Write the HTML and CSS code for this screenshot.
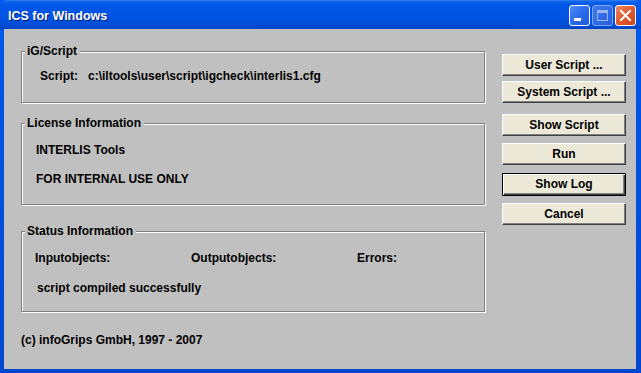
FILE: index.html
```html
<!DOCTYPE html>
<html>
<head>
<meta charset="utf-8">
<title>ICS for Windows</title>
<link rel="stylesheet" href="styles.css">
</head>
<body>
<div class="window">
  <div class="titlebar">
    <div class="title">ICS for Windows</div>
    <div class="tbuttons">
      <div class="tbtn tmin"><svg width="21" height="21" viewBox="0 0 21 21"><rect x="5" y="13" width="7" height="3" fill="#fff"/></svg></div>
      <div class="tbtn tmax"><svg width="21" height="21" viewBox="0 0 21 21"><rect x="5.5" y="5.5" width="10" height="10" fill="none" stroke="#9db4ee" stroke-width="1"/><rect x="5" y="5" width="11" height="3" fill="#9db4ee"/></svg></div>
      <div class="tbtn tclose"><svg width="21" height="21" viewBox="0 0 21 21"><path d="M6 6 L15 15 M15 6 L6 15" stroke="#fff" stroke-width="2" stroke-linecap="square"/></svg></div>
    </div>
  </div>
  <div class="client">
    <div class="main">
      <div class="left">
        <fieldset class="group g1">
          <legend>iG/Script</legend>
          <div class="inner">
            <div class="row script-row"><span class="lbl">Script:</span><span>c:\iltools\user\script\igcheck\interlis1.cfg</span></div>
          </div>
        </fieldset>
        <fieldset class="group g2">
          <legend>License Information</legend>
          <div class="inner">
            <div class="line">INTERLIS Tools</div>
            <div class="line second">FOR INTERNAL USE ONLY</div>
          </div>
        </fieldset>
        <fieldset class="group g3">
          <legend>Status Information</legend>
          <div class="inner">
            <div class="status-row"><span class="c1">Inputobjects:</span><span class="c2">Outputobjects:</span><span>Errors:</span></div>
            <div class="line msg">script compiled successfully</div>
          </div>
        </fieldset>
      </div>
      <div class="right">
        <div class="btn b1">User Script ...</div>
        <div class="btn b2">System Script ...</div>
        <div class="btn b3">Show Script</div>
        <div class="btn b4">Run</div>
        <div class="btn b5 default">Show Log</div>
        <div class="btn b6">Cancel</div>
      </div>
    </div>
    <div class="footer">(c) infoGrips GmbH, 1997 - 2007</div>
  </div>
</div>
</body>
</html>
```
FILE: styles.css
```css
html, body {
  margin: 0;
  padding: 0;
  background: #c0c0c0;
}
.window {
  width: 641px;
  height: 373px;
  box-sizing: border-box;
  background: linear-gradient(to bottom, #0058ee, #0047d0);
  display: flex;
  flex-direction: column;
  font-family: "Liberation Sans", Arial, sans-serif;
  font-size: 12px;
  font-weight: bold;
  color: #000;
}
.titlebar {
  height: 29px;
  flex: none;
  display: flex;
  align-items: center;
  justify-content: space-between;
  background: linear-gradient(to bottom, #2f7ff5 0, #0a5fe9 2px, #0058e8 5px, #0055e5 12px, #0053e1 60%, #004ed8 85%, #0044c4 100%);
  border-radius: 7px 7px 0 0;
  padding: 0 5px 0 8px;
}
.title {
  color: #fff;
  font-size: 12.5px;
  font-weight: bold;
  text-shadow: 1px 1px 0 #0a1e7a;
  padding-top: 2px;
}
.tbuttons {
  display: flex;
  gap: 2px;
  padding-top: 1px;
}
.tbtn {
  width: 21px;
  height: 21px;
  box-sizing: border-box;
  border: 1px solid #fff;
  border-radius: 3px;
  display: flex;
  align-items: center;
  justify-content: center;
  overflow: hidden;
}
.tbtn svg { display: block; margin: -1px; }
.tmin {
  background: linear-gradient(135deg, #4f8cf8 0%, #2b6cec 50%, #1d58d8 100%);
}
.tmax {
  border-color: #7ea4f0;
  background: linear-gradient(135deg, #3d7df2 0%, #2f6ae6 60%, #285fdc 100%);
}
.tclose {
  background: linear-gradient(135deg, #ec8a62 0%, #e0582c 50%, #cc4419 100%);
}
.client {
  flex: 1;
  margin: 0 5px 4px 4px;
  background: #c0c0c0;
  display: flex;
  flex-direction: column;
  padding: 16px 0 0 17px;
}
.main {
  display: flex;
}
.left {
  width: 465px;
  display: flex;
  flex-direction: column;
}
.group {
  margin: 0;
  padding: 0;
  box-sizing: border-box;
  width: 464px;
  border: 1px solid #808080;
  box-shadow: 1px 1px 0 #fff, inset 1px 1px 0 #fff;
  min-inline-size: 0;
}
.group legend {
  padding: 0 3px 0 2px;
  margin-left: 3px;
  line-height: 13px;
  background: #c0c0c0;
}
.g1 { height: 58px; }
.g1 .inner { padding: 12px 0 0 18px; }
.g2 { height: 88px; margin-top: 14px; }
.g2 .inner { padding: 14px 0 0 14px; }
.g3 { height: 87px; margin-top: 20px; }
.g3 .inner { padding: 14px 0 0 13px; }
.line, .row, .status-row { line-height: 13px; white-space: nowrap; }
.script-row .lbl { display: inline-block; width: 48px; }
.second { margin-top: 16px; }
.status-row { display: flex; }
.status-row .c1 { width: 156px; }
.status-row .c2 { width: 166px; }
.msg { margin-top: 17px; margin-left: 2px; }
.right {
  margin-left: 16px;
  display: flex;
  flex-direction: column;
  padding-top: 9px;
}
.btn {
  width: 124px;
  height: 22px;
  box-sizing: border-box;
  background: #ece9d8;
  border: 1px solid;
  border-color: #fff #404040 #404040 #fff;
  box-shadow: inset -1px -1px 0 #808080;
  display: flex;
  align-items: center;
  justify-content: center;
  line-height: 13px;
}
.b2 { margin-top: 5px; }
.b3 { margin-top: 11px; }
.b4 { margin-top: 7px; }
.b5 { margin-top: 8px; height: 23px; }
.b6 { margin-top: 7px; }
.btn.default {
  border: 1px solid #000;
  box-shadow: inset 1px 1px 0 #fff, inset -1px -1px 0 #404040, inset -2px -2px 0 #808080;
}
.footer {
  margin-top: 22px;
  line-height: 13px;
}
```
